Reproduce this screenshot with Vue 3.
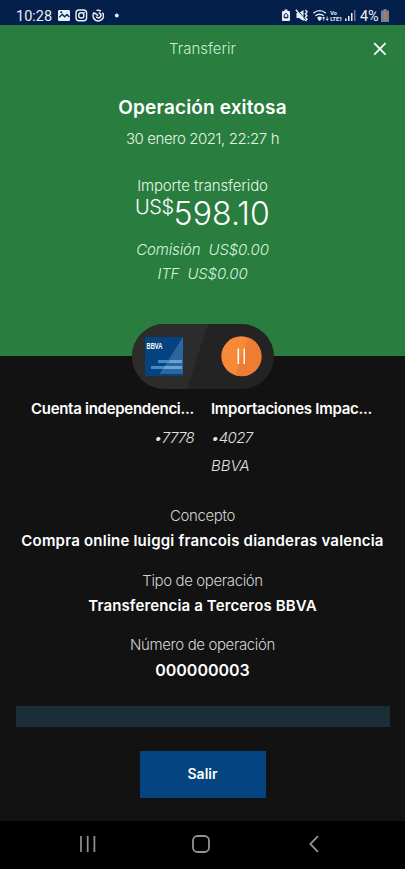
<script setup>
const details = [
  { label: 'Concepto', value: 'Compra online luiggi francois dianderas valencia', l: 'concept-label', v: 'concept-value' },
  { label: 'Tipo de operación', value: 'Transferencia a Terceros BBVA', l: 'type-label', v: 'type-value' },
  { label: 'Número de operación', value: '000000003', l: 'number-label', v: 'number-value' }
]
</script>

<template>
  <main class="screen">
    <header class="status">
      <span class="clock">10:28</span>
      <svg class="notifications" width="64" height="16" viewBox="0 0 64 16">
        <rect x="1" y="2" width="12" height="11" rx="1.2" fill="#e9effa" />
        <path d="M2.2 9.2 5.3 6.3l2.3 2.5L10 6.5l2.3 2.5" fill="none" stroke="#04204a" stroke-width="1.3" />
        <circle cx="4.3" cy="4.3" r="1" fill="#04204a" />
        <g fill="none" stroke="#e9effa" stroke-width="1.4">
          <rect x="19" y="2" width="10.6" height="10.8" rx="3" />
          <circle cx="24.3" cy="7.4" r="2.6" />
          <path d="M37.3 4.3a5.2 5.2 0 1 0 8.2.4M39.5 2.5a5 5 0 0 1 4.5.7M41.8 4.9a2.5 2.5 0 1 1-2.6 3.6M37.7 5.2l3.5 2.5" stroke-width="1.6" />
        </g>
        <circle cx="27.2" cy="4.5" r=".8" fill="#e9effa" />
        <circle cx="59.8" cy="7.5" r="1.9" fill="#e9effa" />
      </svg>
      <svg class="signals" width="76" height="16" viewBox="0 0 76 16">
        <path d="M3.5 3V1.5h3V3H8q1 0 1 1v8q0 1-1 1H2q-1 0-1-1V4q0-1 1-1z" fill="#e9effa" />
        <path d="m2.8 7.4 2.2-2 2.2 2M3.4 9.4h3.2M3.2 7.2v2.6h3.6V7.2" fill="none" stroke="#04204a" />
        <path d="M15.5 5H18l4.5-3v11L18 10h-2.5z" fill="#e9effa" />
        <path d="m15.8 1.2 8 9.5" stroke="#04204a" stroke-width="1" />
        <path d="m14.8 1.7 9 10.5M24.4 2l1.6 1.8L24.4 6 26 7.7l-1.6 1.8 1.6 1.7-1.6 1.8" fill="none" stroke="#e9effa" stroke-width="1.4" />
        <g fill="none" stroke="#e9effa" stroke-width="1.4">
          <path d="M32.3 5.2q6.3-5.1 12.6 0M34.4 7.8q4.2-3.2 8.4 0M36.6 10q2-1.4 4 0" />
        </g>
        <path d="m36.8 10.8 1.8-1 1.8 1-1.8 2zM42.7 12.7V9m-1.3 1.3L42.7 9 44 10.3M46.2 8.5v3.7m-1.3-1.3 1.3 1.3 1.3-1.3" fill="#e9effa" stroke="#e9effa" stroke-width=".8" />
        <text x="49.2" y="7" class="tiny">Vo</text>
        <text x="49.2" y="13" class="tiny">LTE1</text>
        <path d="M64 10.5h1.5V13H64zM67 8h1.5v5H67zM70 5h1.5v8H70z" fill="#e9effa" />
        <path d="M73 2h1.5v11H73z" fill="#667792" />
      </svg>
      <span class="percent">4%</span>
      <svg class="battery" width="8" height="13" viewBox="0 0 8 13">
        <path d="M2.5 0h3v1.4H8V13H0V1.4h2.5z" fill="#76808f" />
        <path d="M3.3 2.8h1.4V8H3.3zM3.3 9.2h1.4v1.6H3.3z" fill="#e36b58" />
      </svg>
    </header>

    <section class="summary">
      <div class="toolbar">
        <span class="toolbar-title">Transferir</span>
        <button class="close" aria-label="Cerrar">
          <svg width="14" height="14" viewBox="0 0 14 14"><path d="m1.2 1.2 11.4 11.4m0-11.4L1.2 12.6" fill="none" stroke="#fff" stroke-width="1.7" /></svg>
        </button>
      </div>
      <h1>Operación exitosa</h1>
      <div class="date">30 enero 2021, 22:27 h</div>
      <div class="amount-label">Importe transferido</div>
      <div class="amount"><span class="currency">US$</span><span class="value">598.10</span></div>
      <div class="fee commission">Comisión&nbsp; US$0.00</div>
      <div class="fee itf">ITF&nbsp; US$0.00</div>
    </section>

    <section class="content">
      <svg class="transfer" width="142" height="66" viewBox="0 0 142 66">
        <rect width="142" height="65" rx="32.5" fill="#232323" />
        <path d="M32.5 0H76L55 65H32.5a32.5 32.5 0 0 1 0-65z" fill="#2c2c2c" />
        <path d="M13 13h38v39H13z" fill="#04437f" />
        <path d="M51 13v37H27.5z" fill="#2c669f" />
        <path d="M26 36h24v3H26zM19 42h31v3H19z" fill="#448ac2" />
        <path d="M38 36h12v3H36.2zM33 42h17v3H31z" fill="#68a2d0" />
        <text x="14.5" y="25.3" class="logo" textLength="16" lengthAdjust="spacingAndGlyphs">BBVA</text>
        <circle cx="109.2" cy="32.2" r="19.9" fill="#f7893b" />
        <path d="M116 13.5a19.9 19.9 0 0 1-12.5 37.8z" fill="#ee7d33" />
        <path d="M106.3 24.5V40M112.2 24.5V40" stroke="#fff" stroke-width="1.5" />
      </svg>
      <div class="accounts">
        <div class="account source">
          <strong>Cuenta independenci...</strong>
          <em class="digits">•7778</em>
        </div>
        <div class="account target">
          <strong>Importaciones Impac...</strong>
          <em class="digits">•4027</em>
          <em class="bank">BBVA</em>
        </div>
      </div>
      <dl>
        <div v-for="item in details" :key="item.label" class="detail">
          <dt :class="item.l">{{ item.label }}</dt>
          <dd :class="item.v">{{ item.value }}</dd>
        </div>
      </dl>
      <div class="band"></div>
      <button class="exit">Salir</button>
    </section>

    <nav class="navigation">
      <svg width="16" height="18" viewBox="0 0 16 18"><path d="M1 1v16M7.7 1v16M14.4 1v16" stroke="#929292" stroke-width="1.7" /></svg>
      <svg class="home" width="18" height="18" viewBox="0 0 18 18"><rect x="1" y="1" width="16" height="16" rx="4.5" fill="none" stroke="#929292" stroke-width="1.8" /></svg>
      <svg class="back" width="10" height="18" viewBox="0 0 10 18"><path d="M9 1.2 1.3 9 9 16.8" fill="none" stroke="#929292" stroke-width="1.8" /></svg>
    </nav>
  </main>
</template>

<style>
body { background: #121212; }
</style>
<style scoped>
* { box-sizing: border-box; }
.screen { width: 405px; height: 869px; display: flex; flex-direction: column; overflow: hidden; color: #fff; background: #121212; font: 15px/24px Inter, sans-serif; white-space: nowrap; }
svg { display: block; flex: none; }
button { font: inherit; color: inherit; border: 0; padding: 0; }
.status { height: 25px; flex: none; display: flex; align-items: flex-start; padding: 8px 16px 0; background: #04204a; color: #e9effa; font: 14.5px/16px Roboto, sans-serif; }
.clock { width: 36px; padding-top: 1px; }
.notifications { margin-left: 5px; }
.signals { margin-left: 160px; }
.percent { margin-left: 3px; width: 20px; padding-top: 1px; letter-spacing: -.2px; }
.battery { margin: 1px 0 0 1px; }
.tiny { font: 700 5.5px Roboto, sans-serif; fill: #e9effa; }
.summary { height: 331px; flex: none; background: #287d3f; text-align: center; }
.toolbar { height: 48px; display: grid; grid-template-columns: 50px 1fr 50px; align-items: center; }
.toolbar-title { grid-column: 2; color: #c9efcf; font-weight: 300; }
.close { background: none; justify-self: center; }
h1 { margin: 23px 0 0; font-size: 19px; line-height: 24px; font-weight: 600; letter-spacing: .14px; }
.date { margin-top: 7px; font-weight: 300; color: #e4f8e5; letter-spacing: -.42px; }
.amount-label { margin-top: 23px; font-weight: 300; color: #e4f8e5; letter-spacing: -.12px; }
.amount { height: 32px; display: flex; justify-content: center; font-weight: 300; }
.currency { font-size: 20px; line-height: 19px; letter-spacing: -.5px; }
.value { font-size: 32px; line-height: 32px; letter-spacing: .1px; }
.fee { height: 24px; font-style: italic; font-weight: 300; color: #d9f5dc; letter-spacing: -.15px; }
.commission { margin-top: 8px; }
.itf { height: 23px; line-height: 23px; }
.content { height: 465px; flex: none; display: flex; flex-direction: column; align-items: center; }
.transfer { margin-top: -32px; }
.accounts { width: 100%; margin-top: 7px; padding: 0 32px; display: grid; grid-template-columns: 162px 162px; gap: 17px; height: 88px; }
.account { display: flex; flex-direction: column; }
.source { align-items: flex-end; }
strong { font-weight: 600; letter-spacing: -.28px; }
em { font-weight: 300; margin-top: 5px; color: #e1e1e1; }
.digits { letter-spacing: -.65px; }
.bank { margin-top: 4px; }
dl { margin: 19px 0 0; text-align: center; }
.detail { height: 64.5px; }
dt { font-weight: 300; color: #d2d2d2; letter-spacing: -.38px; }
dd { margin: 1px 0 0; font-weight: 600; letter-spacing: .14px; }
.concept-value { letter-spacing: .21px; }
.number-value { font-size: 16px; letter-spacing: 0; }
.band { width: 374px; height: 21px; flex: none; margin-top: 8px; background: #1b2d37; }
.exit { width: 126px; height: 47px; flex: none; margin-top: 24px; background: #044480; font-size: 14px; font-weight: 600; }
.navigation { height: 48px; flex: none; background: #000; display: flex; align-items: center; padding: 0 0 2px 80px; }
.home { margin-left: 96px; }
.back { margin-left: 99px; }
.logo { font: 700 9px "Liberation Sans", sans-serif; fill: #fff; }
</style>
